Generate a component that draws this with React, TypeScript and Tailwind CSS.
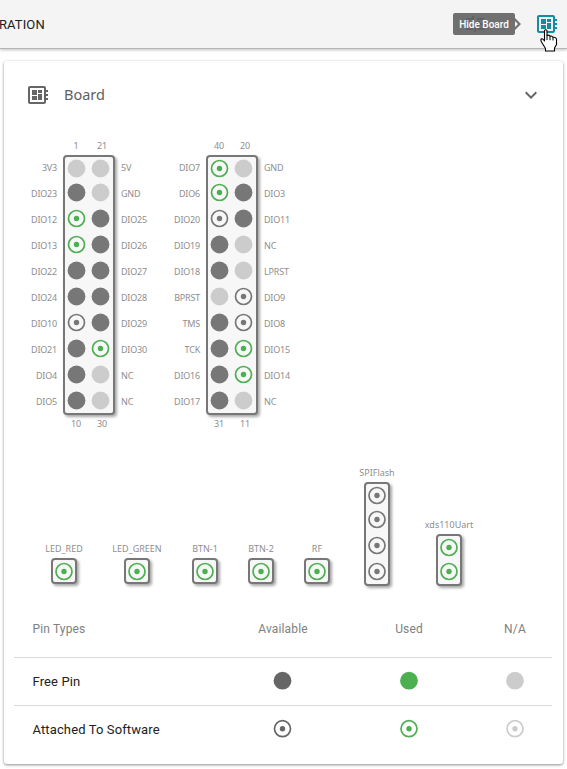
type Kind = "free" | "na" | "used" | "soft" | "softNa" | "usedFree" | "dark" | "softDark";

const COLORS: Record<Kind, string> = {
  free: "#777777",
  na: "#cccccc",
  used: "#4caf50",
  soft: "#777777",
  softNa: "#cccccc",
  usedFree: "#4caf50",
  dark: "#666666",
  softDark: "#666666",
};

function Pin({ kind, cx = 9, cy = 8.5 }: { kind: Kind; cx?: number; cy?: number }) {
  const ring = kind === "used" || kind === "soft" || kind === "softNa" || kind === "softDark";
  const color = COLORS[kind];
  return (
    <svg className="block shrink-0 overflow-visible" width="18" height="18" viewBox="0 0 18 18">
      {ring ? (
        <>
          <circle cx={cx} cy={cy} r="8" fill="none" stroke={color} strokeWidth="1.7" />
          <circle cx={cx} cy={cy} r="2.7" fill={color} />
        </>
      ) : (
        <circle cx={cx} cy={cy} r="8.9" fill={color} />
      )}
    </svg>
  );
}

function PinColumn({ pins, cx }: { pins: Kind[]; cx?: number }) {
  return (
    <div className="flex flex-col gap-2">
      {pins.map((kind, i) => (
        <div key={i} className={i === 0 && pins.length > 1 ? "-mb-0.5" : ""}>
          <Pin kind={kind} cx={cx} />
        </div>
      ))}
    </div>
  );
}

const BOX = "rounded-[4px] border-2 border-[#777] bg-[#f7f7f7] shadow-[2px_2px_3px_rgba(0,0,0,0.35)]";

function Labels({ items, right }: { items: string[]; right?: boolean }) {
  return (
    <div
      className={
        right
          ? "flex w-[50px] flex-col pl-1.5 tracking-[-0.2px]"
          : "flex w-[50px] flex-col items-end pr-1.5 tracking-[-0.2px]"
      }
    >
      {items.map((t, i) => (
        <div key={i} className="h-[26px] leading-[25px]">{t}</div>
      ))}
    </div>
  );
}

interface HeaderData {
  top: [string, string];
  bottom: [string, string];
  left: string[];
  right: string[];
  a: Kind[];
  b: Kind[];
}

const HEADERS: HeaderData[] = [
  {
    top: ["1", "21"],
    bottom: ["10", "30"],
    left: ["3V3", "DIO23", "DIO12", "DIO13", "DIO22", "DIO24", "DIO10", "DIO21", "DIO4", "DIO5"],
    right: ["5V", "GND", "DIO25", "DIO26", "DIO27", "DIO28", "DIO29", "DIO30", "NC", "NC"],
    a: ["na", "free", "used", "used", "free", "free", "soft", "free", "free", "free"],
    b: ["na", "na", "free", "free", "free", "free", "free", "used", "na", "na"],
  },
  {
    top: ["40", "20"],
    bottom: ["31", "11"],
    left: ["DIO7", "DIO6", "DIO20", "DIO19", "DIO18", "BPRST", "TMS", "TCK", "DIO16", "DIO17"],
    right: ["GND", "DIO3", "DIO11", "NC", "LPRST", "DIO9", "DIO8", "DIO15", "DIO14", "NC"],
    a: ["used", "used", "soft", "free", "free", "na", "free", "free", "free", "free"],
    b: ["na", "free", "free", "na", "na", "soft", "soft", "used", "used", "na"],
  },
];

function EndNumbers({ items }: { items: [string, string] }) {
  return (
    <div className="flex h-4 w-[52px] text-center leading-4 tracking-[-0.2px]">
      <span className="w-[26px]">{items[0]}</span>
      <span className="w-[26px]">{items[1]}</span>
    </div>
  );
}

function PinHeader({ data }: { data: HeaderData }) {
  return (
    <div className="flex w-[152px] flex-col items-center">
      <EndNumbers items={data.top} />
      <div className="my-px flex">
        <Labels items={data.left} />
        <div className={"flex h-[260px] w-[52px] gap-1.5 pl-[3px] pt-[3px] " + BOX}>
          <PinColumn pins={data.a} cx={8.5} />
          <PinColumn pins={data.b} cx={8.5} />
        </div>
        <Labels items={data.right} right />
      </div>
      <EndNumbers items={data.bottom} />
    </div>
  );
}

const PARTS: { name: string; pins: Kind[]; box: string; slot: string }[] = [
  { name: "LED_RED", pins: ["used"], box: "mb-[2px] h-[26px]", slot: "w-[72px]" },
  { name: "LED_GREEN", pins: ["used"], box: "mb-[2px] h-[26px]", slot: "w-[74px]" },
  { name: "BTN-1", pins: ["used"], box: "mb-[2px] h-[26px]", slot: "w-[62px]" },
  { name: "BTN-2", pins: ["used"], box: "mb-[2px] h-[26px]", slot: "w-[50px]" },
  { name: "RF", pins: ["used"], box: "mb-[2px] h-[26px]", slot: "w-[62px]" },
  { name: "SPIFlash", pins: ["soft", "soft", "soft", "soft"], box: "h-[104px]", slot: "w-[58px]" },
  { name: "xds110Uart", pins: ["used", "used"], box: "h-[52px]", slot: "w-[86px]" },
];

const BOARD_PATH =
  "M22 9V7h-2V5c0-1.1-.9-2-2-2H4c-1.1 0-2 .9-2 2v14c0 1.1.9 2 2 2h14c1.1 0 2-.9 2-2v-2h2v-2h-2v-2h2v-2h-2V9h2zm-4 10H4V5h14v14zM6 13h5v4H6zm6-6h4v3h-4zM6 7h5v5H6zm6 4h4v6h-4z";

function BoardIcon({ className }: { className: string }) {
  return (
    <svg className={className} width="24" height="24" viewBox="0 0 24 24" fill="currentColor">
      <path d={BOARD_PATH} />
    </svg>
  );
}

function HandCursor() {
  return (
    <svg className="absolute left-[5px] top-[17px]" width="18" height="23" viewBox="0 0 18 23">
      <path
        d="M4.5 1.5Q5.7 0 7 1.5V6.5Q8.5 5.5 10 7.2Q11.5 6.6 13 8.3Q15.5 7.8 16.5 10V15.5L14.5 19V22H5.5V19.5L1.5 13Q0 9.8 2 9.8Q3.2 10 4.5 12Z"
        fill="#fff"
        stroke="#000"
        strokeWidth="1.1"
        strokeLinejoin="round"
      />
      <path d="M7 6.5v4.5M10 7.2v4M13 8.3v3.2" stroke="#000" strokeWidth="1" fill="none" />
    </svg>
  );
}

const GRID = "grid grid-cols-[206px_126px_126px_80px]";

function LegendRow({ name, pins }: { name: string; pins: Kind[] }) {
  return (
    <div className={GRID + " h-12 items-center border-t border-[#dadada] tracking-[0.12px] text-[#212121]"}>
      <div className="pl-[18.5px]">{name}</div>
      {pins.map((k, i) => (
        <div key={i} className={i === 2 ? "flex justify-center pl-[6px]" : "flex justify-center"}>
          <Pin kind={k} cx={i === 0 ? 8.5 : 9} cy={7.7} />
        </div>
      ))}
    </div>
  );
}

export default function App() {
  return (
    <div className="h-[769px] w-[567px] overflow-hidden bg-white font-['Roboto',sans-serif]">
      <header className="flex h-[49px] items-center justify-between border-b border-[#b5b5b5] bg-[#f4f4f4] pr-2 shadow-[0_1px_3px_rgba(0,0,0,0.25)]">
        <div className="-ml-px pt-0.5 text-[13px] leading-5 tracking-[0.1px] text-[#212121]">RATION</div>
        <div className="flex items-center">
          <div className="relative flex h-[22px] w-[62px] items-center justify-center rounded-[2px] bg-[#707070] text-[10px] font-medium text-white">
            <svg className="absolute left-3 top-[2px]" width="20" height="18" viewBox="0 0 20 18" stroke="#626262" strokeWidth="2" fill="none">
              <path d="M1 4h7M12 4h7M8 1v6M1 9h4M9 9h10M14 6v6M1 14h7M12 14h7M10 11v6" />
            </svg>
            <span className="relative">Hide Board</span>
          </div>
          <svg className="block" width="6" height="12" viewBox="0 0 6 12">
            <path d="M0 0L6 6L0 12V9L3 6L0 3Z" fill="#707070" />
          </svg>
          <div className="relative ml-[14px]">
            <BoardIcon className="block text-[#118ca0]" />
            <HandCursor />
          </div>
        </div>
      </header>

      <main className="mx-1 mt-3 h-[703px] rounded-[3px] bg-white shadow-[0_1px_3px_rgba(0,0,0,0.45)]">
        <div className="flex items-center pl-[22px] pr-5 pt-[22px]">
          <BoardIcon className="text-[#666]" />
          <h1 className="-mt-0.5 ml-[14px] h-6 flex-1 font-['Noto_Sans',sans-serif] text-[14.5px] leading-6 text-[#606060]">Board</h1>
          <svg width="24" height="24" viewBox="0 0 24 24" fill="#666">
            <path d="M16.59 8.59L12 13.17 7.41 8.59 6 10l6 6 6-6z" />
          </svg>
        </div>

        <section className="font-['Noto_Sans',sans-serif] text-[9px] text-[#8e8e8e]">
          <div className="flex pl-[9px] pt-[31px]">
            <PinHeader data={HEADERS[0]} />
            <div className="-ml-[9px]">
              <PinHeader data={HEADERS[1]} />
            </div>
          </div>
          <div className="mt-[34px] flex h-[120px] items-end pl-6">
            {PARTS.map((p) => (
              <div key={p.name} className={"flex flex-col items-center " + p.slot}>
                <div className="h-[17px] leading-4">{p.name}</div>
                <div className={"w-[26px] pl-0.5 pt-[3px] " + BOX + " " + p.box}>
                  <PinColumn pins={p.pins} />
                </div>
              </div>
            ))}
          </div>
        </section>

        <section className="ml-[10px] mr-[11px] mt-[15px] text-[13px]">
          <div className={GRID + " h-14 items-center text-[12px] tracking-[0.15px] text-[#808080]"}>
            <div className="pl-[18.5px]">Pin Types</div>
            <div className="text-center">Available</div>
            <div className="text-center">Used</div>
            <div className="pl-[6px] text-center">N/A</div>
          </div>
          <LegendRow name="Free Pin" pins={["dark", "usedFree", "na"]} />
          <LegendRow name="Attached To Software" pins={["softDark", "used", "softNa"]} />
        </section>
      </main>
    </div>
  );
}
